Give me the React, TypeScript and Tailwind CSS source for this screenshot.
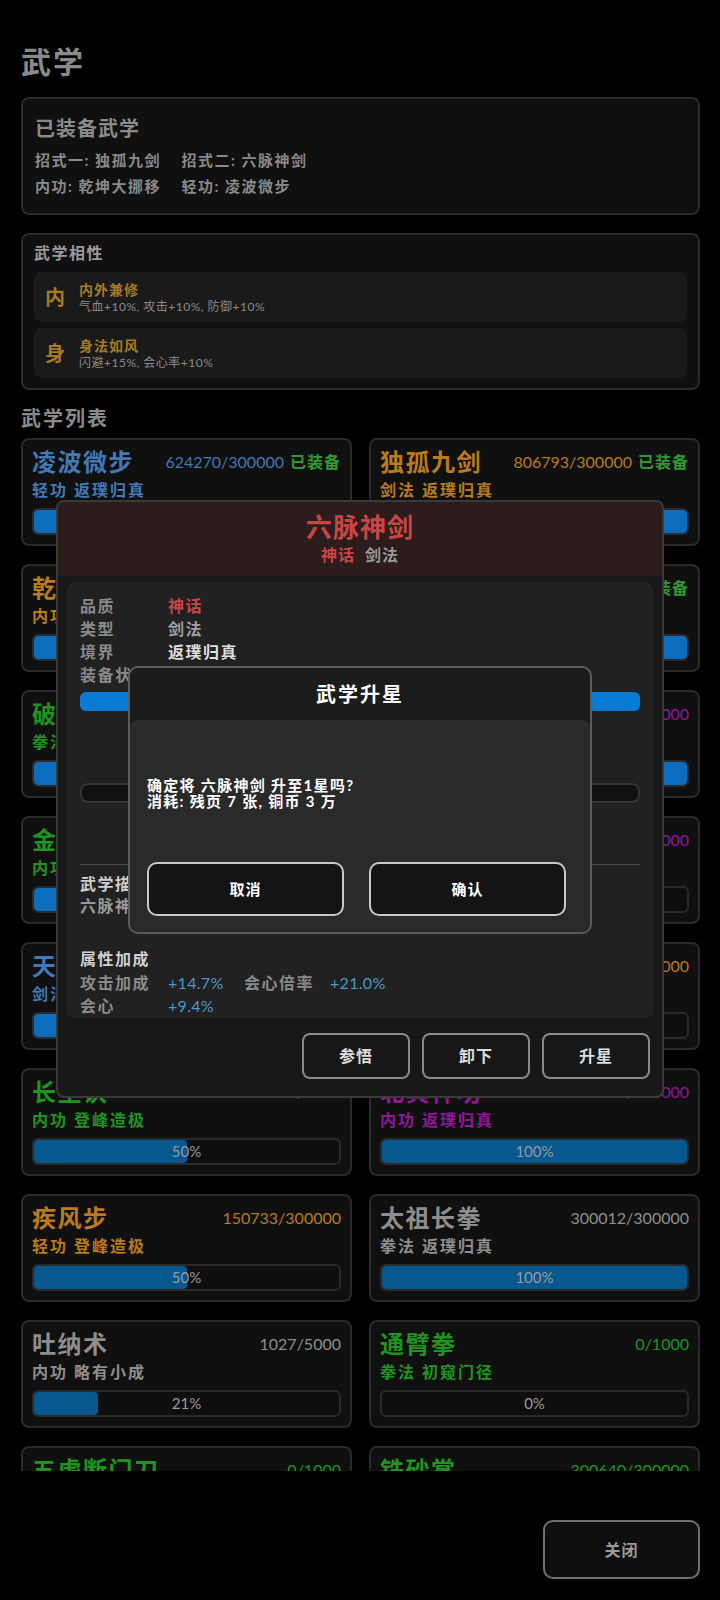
type Skill = {
  name: string;
  color: string;
  progress: string;
  kind: string;
  level: string;
  pct: number;
  equipped?: boolean;
  bright?: boolean;
};

const BLUE = "text-[#4379b5]";
const ORANGE = "text-[#b97b1c]";
const GREEN = "text-[#1f951f]";
const PURPLE = "text-[#93169a]";
const RED = "text-[#c84646]";
const GRAY = "text-[#8e8e8e]";

const skills: Skill[] = [
  { name: "凌波微步", color: BLUE, progress: "624270/300000", kind: "轻功", level: "返璞归真", pct: 100, equipped: true, bright: true },
  { name: "独孤九剑", color: ORANGE, progress: "806793/300000", kind: "剑法", level: "返璞归真", pct: 100, equipped: true, bright: true },
  { name: "乾坤大挪移", color: ORANGE, progress: "512800/300000", kind: "内功", level: "返璞归真", pct: 100, equipped: true, bright: true },
  { name: "六脉神剑", color: RED, progress: "300000/300000", kind: "剑法", level: "返璞归真", pct: 100, equipped: true, bright: true },
  { name: "破玉拳", color: GREEN, progress: "1000/1000", kind: "拳法", level: "返璞归真", pct: 100, bright: true },
  { name: "小无相功", color: PURPLE, progress: "300000/300000", kind: "内功", level: "返璞归真", pct: 100, bright: true },
  { name: "金钟罩", color: GREEN, progress: "1000/1000", kind: "内功", level: "返璞归真", pct: 100, bright: true },
  { name: "天山折梅手", color: PURPLE, progress: "0/300000", kind: "拳法", level: "初窥门径", pct: 0 },
  { name: "天山剑法", color: BLUE, progress: "5000/5000", kind: "剑法", level: "返璞归真", pct: 100, bright: true },
  { name: "辟邪剑法", color: ORANGE, progress: "0/300000", kind: "剑法", level: "初窥门径", pct: 0 },
  { name: "长生诀", color: GREEN, progress: "500/1000", kind: "内功", level: "登峰造极", pct: 50 },
  { name: "北冥神功", color: PURPLE, progress: "300000/300000", kind: "内功", level: "返璞归真", pct: 100 },
  { name: "疾风步", color: ORANGE, progress: "150733/300000", kind: "轻功", level: "登峰造极", pct: 50 },
  { name: "太祖长拳", color: GRAY, progress: "300012/300000", kind: "拳法", level: "返璞归真", pct: 100 },
  { name: "吐纳术", color: GRAY, progress: "1027/5000", kind: "内功", level: "略有小成", pct: 21 },
  { name: "通臂拳", color: GREEN, progress: "0/1000", kind: "拳法", level: "初窥门径", pct: 0 },
  { name: "五虎断门刀", color: GREEN, progress: "0/1000", kind: "刀法", level: "初窥门径", pct: 0 },
  { name: "铁砂掌", color: GREEN, progress: "300640/300000", kind: "掌法", level: "返璞归真", pct: 100 },
];

const SkillCard = ({ s }: { s: Skill }) => (
  <div className="h-[108px] rounded-lg border-2 border-[#2a2a2a] bg-[#101010] px-[9px] pt-[7px]">
    <div className="flex h-[30px] items-center justify-between">
      <span className={`text-[24px] font-bold tracking-[1.5px] ${s.color}`}>{s.name}</span>
      <span className="flex items-center gap-[6px] text-[16px]">
        <span className={s.color}>{s.progress}</span>
        {s.equipped && <span className="font-bold tracking-[1px] text-[#2f9a2f]">已装备</span>}
      </span>
    </div>
    <div className={`mt-[1px] h-[24px] text-[16px] font-bold leading-[24px] tracking-[2px] ${s.color}`}>
      {s.kind} {s.level}
    </div>
    <div className="relative mt-[6px] h-[27px] overflow-hidden rounded-md border-2 border-[#2a2a2a] bg-[#0e0e0e]">
      <div
        className={`h-full rounded-sm ${s.bright ? "bg-[#0b6dbb]" : "bg-[#07588f]"}`}
        style={{ width: `${s.pct}%` }}
      />
      <span className="absolute inset-0 flex items-center justify-center text-[15px] text-[#9a9a9a]">
        {s.pct}%
      </span>
    </div>
  </div>
);

const Affinity = ({ tag, title, desc }: { tag: string; title: string; desc: string }) => (
  <div className="flex h-[50px] items-center rounded-lg bg-[#1a1a1a] pl-[11px]">
    <span className="w-[34px] text-[20px] font-bold text-[#a87a24]">{tag}</span>
    <div className="flex flex-col">
      <span className="text-[14px] font-bold leading-[18px] tracking-[1px] text-[#a87a24]">{title}</span>
      <span className="text-[12px] leading-[15px] tracking-[0.5px] text-[#8a8a8a]">{desc}</span>
    </div>
  </div>
);

const DetailModal = () => (
  <div className="absolute left-[56px] top-[500px] flex h-[598px] w-[608px] flex-col overflow-hidden rounded-lg border-2 border-[#3a3a3a] bg-[#181818]">
    <div className="flex h-[74px] flex-col items-center bg-[#2c1c1c] pt-[10px]">
      <span className="text-[26px] font-bold leading-[30px] tracking-[1px] text-[#c84646]">六脉神剑</span>
      <div className="mt-[2px] flex gap-[10px] text-[16px] font-bold leading-[22px] tracking-[1px]">
        <span className="text-[#c84646]">神话</span>
        <span className="text-[#9a9a9a]">剑法</span>
      </div>
    </div>
    <div className="mx-[9px] mt-[7px] h-[435px] overflow-hidden rounded-md bg-[#212121] px-[13px] pt-[11px] tracking-[1.5px]">
      <div className="text-[16px] font-bold leading-[23px]">
        <div className="flex"><span className="w-[88px] text-[#8a8a8a]">品质</span><span className="text-[#c84646]">神话</span></div>
        <div className="flex"><span className="w-[88px] text-[#8a8a8a]">类型</span><span className="text-[#a0a0a0]">剑法</span></div>
        <div className="flex"><span className="w-[88px] text-[#8a8a8a]">境界</span><span className="text-[#dddddd]">返璞归真</span></div>
        <div className="flex"><span className="w-[88px] text-[#8a8a8a]">装备状态</span><span className="text-[#2f9a2f]">已装备</span></div>
      </div>
      <div className="mt-[6px] h-[19px] rounded-md bg-[#0a7bd4]" />
      <div className="h-[72px]" />
      <div className="h-[20px] rounded-lg border-2 border-[#333] bg-[#111]" />
      <div className="mt-[61px] h-px bg-[#4a4a4a]" />
      <div className="mt-[8px] text-[16px] font-bold leading-[22px]">
        <div className="text-[#cfcfcf]">武学描述</div>
        <div className="text-[#9a9a9a]">六脉神剑，以内力化剑气。</div>
      </div>
      <div className="mt-[31px] text-[16px] font-bold leading-[22px] text-[#cfcfcf]">属性加成</div>
      <div className="mt-[1px] flex text-[16px] leading-[24px]">
        <span className="w-[88px] font-bold text-[#8a8a8a]">攻击加成</span>
        <span className="w-[76px] tracking-[0.3px] text-[#4a98cc]">+14.7%</span>
        <span className="w-[86px] font-bold text-[#8a8a8a]">会心倍率</span>
        <span className="tracking-[0.3px] text-[#4a98cc]">+21.0%</span>
      </div>
      <div className="flex text-[16px] leading-[22px]">
        <span className="w-[88px] font-bold text-[#8a8a8a]">会心</span>
        <span className="tracking-[0.3px] text-[#4a98cc]">+9.4%</span>
      </div>
    </div>
    <div className="mt-[15px] flex justify-end gap-[12px] pr-[12px]">
      {["参悟", "卸下", "升星"].map((t) => (
        <button
          key={t}
          className="flex h-[46px] w-[108px] items-center justify-center rounded-lg border-2 border-[#8a8a8a] bg-[#171717] text-[16px] font-bold tracking-[1px] text-[#dddddd]"
        >
          {t}
        </button>
      ))}
    </div>
  </div>
);

const ConfirmDialog = () => (
  <div className="absolute left-[128px] top-[666px] flex h-[268px] w-[464px] flex-col overflow-hidden rounded-[10px] border-2 border-[#5c5c5c] bg-[#1c1c1c]">
    <div className="flex h-[52px] items-center justify-center text-[20px] font-bold tracking-[2px] text-white">武学升星</div>
    <div className="flex-1 rounded-t-lg bg-[#2a2a2a] pl-[17px] pt-[57px]">
      <div className="text-[15px] font-bold leading-[16px] tracking-[1.3px] text-white">
        <div>确定将 六脉神剑 升至1星吗?</div>
        <div>消耗: 残页 7 张, 铜币 3 万</div>
      </div>
      <div className="mt-[53px] flex gap-[25px]">
        {["取消", "确认"].map((t) => (
          <button
            key={t}
            className="flex h-[54px] w-[197px] items-center justify-center rounded-[10px] border-2 border-[#c8c8c8] bg-[#141414] text-[15px] font-bold tracking-[1px] text-white"
          >
            {t}
          </button>
        ))}
      </div>
    </div>
  </div>
);

export default function App() {
  return (
    <div className="relative flex h-[1600px] w-[720px] flex-col overflow-hidden bg-black font-['Lato','Noto_Sans_CJK_SC',sans-serif]">
      <div className="h-[1471px] overflow-hidden pl-[21px] pr-5 pt-[38px]">
        <h1 className="h-[46px] text-[30px] font-bold leading-[46px] tracking-[2px] text-[#8a8a8a]">武学</h1>

        <div className="mt-[13px] h-[118px] rounded-lg border-2 border-[#2a2a2a] bg-[#101010] px-[12px] pt-[14px]">
          <div className="text-[20px] font-bold leading-[30px] tracking-[1px] text-[#8a8a8a]">已装备武学</div>
          <div className="mt-[4px] text-[15px] font-bold leading-[26px] tracking-[1.5px] text-[#8a8a8a]">
            <div>招式一: 独孤九剑&nbsp;&nbsp;&nbsp;&nbsp;招式二: 六脉神剑</div>
            <div>内功: 乾坤大挪移&nbsp;&nbsp;&nbsp;&nbsp;轻功: 凌波微步</div>
          </div>
        </div>

        <div className="mt-[18px] h-[157px] rounded-lg border-2 border-[#2a2a2a] bg-[#101010] px-[11px] pt-[8px]">
          <div className="text-[16px] font-bold leading-[20px] tracking-[1.5px] text-[#9a9a9a]">武学相性</div>
          <div className="mt-[9px] flex flex-col gap-[6px]">
            <Affinity tag="内" title="内外兼修" desc="气血+10%, 攻击+10%, 防御+10%" />
            <Affinity tag="身" title="身法如风" desc="闪避+15%, 会心率+10%" />
          </div>
        </div>

        <h2 className="mt-[14px] h-[28px] text-[20px] font-bold leading-[28px] tracking-[2px] text-[#8a8a8a]">武学列表</h2>

        <div className="mt-[6px] grid grid-cols-2 gap-x-[17px] gap-y-[18px]">
          {skills.map((s) => (
            <SkillCard key={s.name} s={s} />
          ))}
        </div>
      </div>

      <div className="flex justify-end px-5 pt-[49px]">
        <button className="flex h-[59px] w-[157px] items-center justify-center rounded-[10px] border-2 border-[#707070] bg-[#0f0f0f] text-[16px] font-bold tracking-[1px] text-[#9a9a9a]">
          关闭
        </button>
      </div>

      <DetailModal />
      <ConfirmDialog />
    </div>
  );
}
